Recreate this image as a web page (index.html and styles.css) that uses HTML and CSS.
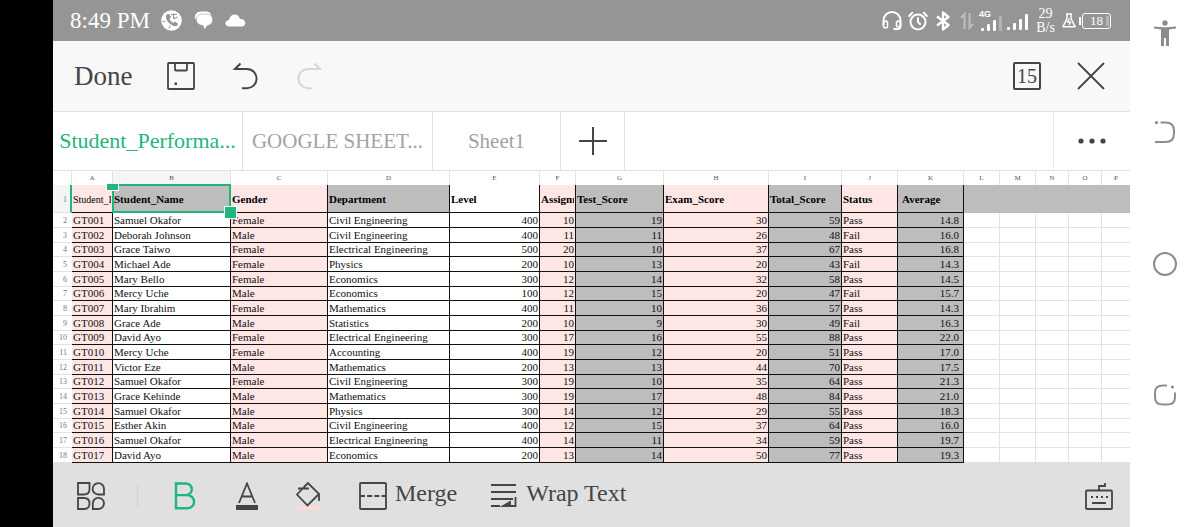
FILE: index.html
```html
<!DOCTYPE html>
<html lang="en">
<head>
<meta charset="utf-8">
<title>Student_Performance</title>
<link rel="stylesheet" href="styles.css">
</head>
<body>
<div class="device">
  <main class="app">
    <header class="status">
      <span class="clock">8:49 PM</span>
      <svg class="st-call" width="21" height="21" viewBox="0 0 21 21"><circle cx="10.500" cy="10.500" r="10.300" fill="#fff"/><path d="M5.500 4.500c-1 2-.5 5.500 2.500 8.500s6.500 4 8.500 2.500l.5-2-3-2-1.800 1.500c-2-1-3.200-2.500-3.700-4.200L10 7 8.500 4z" fill="#959595"/><path d="M10 4.500h6M12.500 3.500v4q0 2 4-.5" fill="none" stroke="#959595" stroke-width="1.200"/><path d="M1.500 11l3 1M8 18.500l1-3" stroke="#959595"/></svg>
      <svg class="st-chat" width="19" height="19" viewBox="0 0 19 19"><path d="M1 8c-1-4 2-7.500 6-7.500h5c3 0 5 2 5.500 4L8 4z" fill="#fff"/><path d="M9 3h3.500c8 0 8 10.500 1 11.500L10.500 18.500 9 14.500C0 14 0 3 9 3z" fill="#fff" stroke="#959595" stroke-width=".5"/></svg>
      <svg class="st-cloud" width="21" height="13" viewBox="0 0 21 13"><path d="M4 12.500C-1 12-1 6.500 4 6 5-.5 13-1.500 15 5c5-1 7.500 6 2.500 7.500z" fill="#fff"/></svg>
      <span class="grow"></span>
      <svg class="st-head" width="20" height="20" viewBox="0 0 20 20" fill="none" stroke="#fff" stroke-width="2"><path d="M1.500 14V9.500a8.500 8.500 0 0 1 17 0V15q0 3-3 3h-4"/><path d="M1.500 12q0-2 2-2t2 2v3q0 2-2 2t-2-2zM18.500 12q0-2-2-2t-2 2v2q0 2 2 2t2-2z" stroke-width="1.600"/></svg>
      <svg class="st-alarm" width="20" height="20" viewBox="0 0 20 20" fill="none" stroke="#fff" stroke-width="2" stroke-linecap="round"><circle cx="10" cy="11" r="7.500"/><path d="M10 7v4l2 2M1.200 5l3-3.200M18.800 5l-3-3.200"/></svg>
      <svg class="st-bt" width="14" height="20" viewBox="0 0 14 20" fill="none" stroke="#fff" stroke-width="2.300" stroke-linejoin="round"><path d="M1 5.500l11.500 8.500L7 18.500v-17L12.500 6 1 14.500"/></svg>
      <svg class="st-arrows" width="14" height="18" viewBox="0 0 14 18" fill="none" stroke="#bdbdbd" stroke-width="2"><path d="M4.500 17V2L1 6M9.500 1v15l3.500-4"/></svg>
      <span class="net"><span class="net-tag">4G</span><svg width="22" height="15" viewBox="0 0 22 15"><g fill="#fff"><rect x="1" y="12" width="3" height="3" rx="1"/><rect x="7" y="8" width="3" height="7" rx="1"/><rect x="13" y="4" width="3" height="11" rx="1"/></g><rect x="19" width="3" height="15" rx="1" fill="#b5b5b5"/></svg></span>
      <svg class="st-sig" width="21" height="16" viewBox="0 0 21 16" fill="#fff"><rect y="13" width="3" height="3" rx="1"/><rect x="6" y="9" width="3" height="7" rx="1"/><rect x="12" y="5" width="3" height="11" rx="1"/><rect x="18" width="3" height="16" rx="1"/></svg>
      <span class="rate"><span>29</span><span>B/s</span></span>
      <svg class="st-flask" width="14" height="15" viewBox="0 0 14 15" fill="none" stroke="#fff" stroke-width="1.500" stroke-linejoin="round"><path d="M4 1h6M5 1v4.500L1 13.700h12L9 5.500V1M7.500 5.500L5.500 9h3L7 12"/></svg>
      <span class="cap"></span><span class="battery">18</span>
    </header>

    <nav class="toolbar">
      <button class="done">Done</button>
      <button class="t-save" aria-label="Save"><svg width="28" height="28" viewBox="0 0 28 28" fill="none" stroke="#454545" stroke-width="1.800"><rect x="1" y="1" width="26" height="26" rx="1"/><path d="M8 1v6.500q0 1 1 1h10q1 0 1-1V1"/><rect x="8" y="21" width="1.500" height="1.500" fill="#454545" stroke-width="1"/></svg></button>
      <button class="t-undo" aria-label="Undo"><svg width="26" height="28" viewBox="0 0 26 28" fill="none" stroke="#454545" stroke-width="2"><path d="M8.500 1.500L3 7h12a9.600 9.600 0 0 1 0 19.200H10"/></svg></button>
      <button class="t-redo" aria-label="Redo" disabled><svg width="26" height="28" viewBox="0 0 26 28" fill="none" stroke="#d6d6d6" stroke-width="2"><path d="M19.500 1.500L25 7H13a9.600 9.600 0 0 0 0 19.200h4"/></svg></button>
      <span class="grow"></span>
      <button class="count">15</button>
      <button class="t-close" aria-label="Close"><svg width="28" height="28" viewBox="0 0 28 28" stroke="#454545" stroke-width="1.800"><path d="M1 1l26 26M27 1L1 27"/></svg></button>
    </nav>

    <nav class="tabs">
      <button class="tab tab-on">Student_Performa...</button>
      <button class="tab">GOOGLE SHEET...</button>
      <button class="tab tab-short">Sheet1</button>
      <button class="tab tab-add" aria-label="Add sheet"><svg width="28" height="28" viewBox="0 0 28 28" stroke="#454545" stroke-width="2"><path d="M14 0v28M0 14h28"/></svg></button>
      <span class="grow"></span>
      <button class="more" aria-label="More"><svg width="28" height="6" viewBox="0 0 28 6" fill="#454545"><circle cx="3" cy="3" r="2.600"/><circle cx="14" cy="3" r="2.600"/><circle cx="25" cy="3" r="2.600"/></svg></button>
    </nav>

    <section class="sheet">
      <table>
        <colgroup><col class="w-no"><col class="w-a"><col class="w-b"><col class="w-c"><col class="w-d"><col class="w-e"><col class="w-f"><col class="w-g"><col class="w-h"><col class="w-i"><col class="w-j"><col class="w-k"><col class="w-l"><col class="w-m"><col class="w-n"><col class="w-n"><col></colgroup>
        <thead>
          <tr class="letters"><th class="corner"></th><th>A</th><th class="picked">B</th><th>C</th><th>D</th><th>E</th><th>F</th><th>G</th><th>H</th><th>I</th><th>J</th><th>K</th><th>L</th><th>M</th><th>N</th><th>O</th><th>P</th></tr>
          <tr class="titles"><th class="no picked">1</th><th class="ink pink first"><span class="clip">Student_ID</span></th><th class="ink gray selected">Student_Name<span class="frame"></span><span class="handle top"></span><span class="handle bottom"></span></th><th class="ink pink">Gender</th><th class="ink gray">Department</th><th class="ink">Level</th><th class="ink pink"><span class="clip">Assignment</span></th><th class="ink gray">Test_Score</th><th class="ink pink">Exam_Score</th><th class="ink gray">Total_Score</th><th class="ink pink">Status</th><th class="ink gray avg">Average</th><th class="gray"></th><th class="gray"></th><th class="gray"></th><th class="gray"></th><th class="gray"></th></tr>
        </thead>
        <tbody id="rows"></tbody>
      </table>
    </section>

    <footer class="format">
      <button class="f-menu" aria-label="Tools"><svg width="28" height="28" viewBox="0 0 28 28" fill="none" stroke="#454545" stroke-width="1.800"><path d="M1 1h11.500v6q0 5.500-5.500 5.500H1zM27 12.500h-5.500a5.700 5.700 0 1 1 5.500-5.700zM1 27V16h6q5.500 0 5.500 5.500T7 27zM15.800 27v-5.500a5.600 5.600 0 1 1 5.600 5.500z"/></svg></button>
      <span class="rule"></span>
      <button class="f-bold" aria-label="Bold"><svg width="22" height="28" viewBox="0 0 22 28" fill="none" stroke="#1fb57d" stroke-width="2.400"><path d="M2 1.500h10a5.800 5.800 0 0 1 0 11.600H2zM2 13.100h11.500a6.600 6.600 0 0 1 0 13.200H2zM2 1.500v25"/></svg></button>
      <button class="f-color" aria-label="Font colour"><svg width="22" height="28" viewBox="0 0 22 28"><path d="M3 21L11 1.500 19 21M6 14.500h10" fill="none" stroke="#454545" stroke-width="1.800"/><path d="M0 23h22v5H0z" fill="#454545"/></svg></button>
      <button class="f-fill" aria-label="Fill colour"><svg width="26" height="28" viewBox="0 0 26 28"><path d="M2 24h22v4H2z" fill="#fddcda"/><path d="M13 1L2 12.500l10.500 11L24 12zM13 1L9 5M3 6.500h11M24 11v8" fill="none" stroke="#454545" stroke-width="1.800"/></svg></button>
      <button class="f-merge"><svg width="28" height="28" viewBox="0 0 28 28" fill="none" stroke="#454545" stroke-width="1.800"><rect x="1" y="1" width="26" height="26" rx="1"/><path d="M1 14h26" stroke-dasharray="5 2.200"/></svg><span class="word">Merge</span></button>
      <button class="f-wrap"><svg width="26" height="26" viewBox="0 0 26 26" fill="none" stroke="#454545" stroke-width="1.800"><path d="M0 2h25M0 9h25M0 16h22M0 23h9M24.500 14v9H14"/><path d="M12 23l7-4v4z" fill="#454545"/></svg><span class="word">Wrap Text</span></button>
      <span class="grow"></span>
      <button class="f-keys" aria-label="Keyboard"><svg width="28" height="28" viewBox="0 0 28 28" fill="none" stroke="#454545" stroke-width="1.800"><rect x="1" y="8.500" width="26" height="18.500" rx="1"/><path d="M14 9V4h6V1M7 21h14"/><path d="M6 15h2M11 15h2M16 15h2M21 15h2"/></svg></button>
    </footer>
  </main>

  <aside class="sysnav">
    <button aria-label="Accessibility"><svg width="24" height="26" viewBox="0 0 24 26" fill="#8d8d8d"><circle cx="12" cy="3" r="2.700"/><path d="M1 6.500q11 1.500 22 0v2l-7 1V26h-3v-8h-2v8H8V9.500l-7-1z"/></svg></button>
    <button class="s-back" aria-label="Back"><svg width="22" height="22" viewBox="0 0 22 22" fill="none" stroke="#8d8d8d" stroke-width="2"><path d="M6.500 1.500h5q8.500 0 8.500 8v3q0 8.500-8.500 8.500H1"/><circle cx="2.500" cy="1.700" r="1.600" fill="#8d8d8d" stroke="none"/></svg></button>
    <button class="s-home" aria-label="Home"><svg width="24" height="24" viewBox="0 0 24 24" fill="none" stroke="#8d8d8d" stroke-width="2"><circle cx="12" cy="12" r="11"/></svg></button>
    <button class="s-recent" aria-label="Recent"><svg width="22" height="22" viewBox="0 0 22 22" fill="none" stroke="#8d8d8d" stroke-width="2"><path d="M13 1.500H9q-8 0-8 7v5q0 7 8 7h4q8 0 8-7V8.500"/><circle cx="18.500" cy="3" r="1.600" fill="#8d8d8d" stroke="none"/></svg></button>
  </aside>
</div>
<script src="rows.js"></script>
</body>
</html>
```

FILE: styles.css
```css
* { box-sizing: border-box; }

body {
  margin: 0;
  background: #fff;
  font-family: "Liberation Serif", serif;
  color: #454545;
}

button {
  display: flex;
  align-items: center;
  justify-content: center;
  flex: none;
  margin: 0;
  padding: 0;
  border: 0;
  background: none;
  font: inherit;
  color: inherit;
  white-space: nowrap;
}

svg { display: block; flex: none; }
.grow { flex: 1; }

.device {
  display: flex;
  min-height: 100vh;
  border-left: 53px solid #000;
}

.app {
  flex: 1;
  min-width: 0;
  display: flex;
  flex-direction: column;
}

/* Status bar */
.status {
  display: flex;
  align-items: center;
  height: 41px;
  padding: 0 19px 0 17px;
  background: #959595;
  color: #fff;
  font-size: 23px;
}
.clock { width: 81px; white-space: nowrap; }
.st-call { margin-left: 10px; }
.st-chat { margin-left: 12px; }
.st-cloud { margin-left: 12px; }
.st-alarm { margin-left: 6px; }
.st-bt { margin-left: 8px; }
.st-arrows { margin-left: 10px; }
.net { position: relative; margin: 6px 0 0 6px; }
.net-tag {
  position: absolute;
  left: -1px;
  top: -6px;
  font: bold 9px/9px "Liberation Sans", sans-serif;
}
.st-sig { margin: 3px 0 0 5px; }
.rate {
  display: flex;
  flex-direction: column;
  align-items: center;
  margin-left: 7px;
  width: 21px;
  font-size: 14px;
  line-height: 14px;
}
.st-flask { margin-left: 6px; }
.cap { width: 2px; height: 8px; margin-left: 3px; background: #fff; }
.battery {
  margin-left: 1px;
  width: 29px;
  height: 16px;
  border: 1px solid #fff;
  border-radius: 3px;
  font-size: 13px;
  line-height: 14px;
  text-align: center;
  background: linear-gradient(#b5b5b5, #b5b5b5) no-repeat 23px 2px / 3px 10px;
}

/* Main toolbar */
.toolbar {
  display: flex;
  align-items: center;
  height: 71px;
  padding: 0 25px 0 21px;
  background: #f8f8f8;
  border-bottom: 1px solid #e2e2e2;
}
.done { font-size: 27px; }
.t-save { margin-left: 35px; }
.t-undo { margin-left: 37px; }
.t-redo { margin-left: 37px; }
.count {
  width: 28px;
  height: 28px;
  border: 2px solid #454545;
  border-radius: 2px;
  font-size: 20px;
}
.t-close { margin-left: 36px; }

/* Sheet tabs */
.tabs {
  display: flex;
  height: 59px;
  border-bottom: 1px solid #e2e2e2;
}
.tab {
  width: 190px;
  border-right: 1px solid #e2e2e2;
  color: #a3a3a3;
  font-size: 21px;
}
.tab-on { color: #1fb57d; font-size: 22px; }
.tab-short { width: 128px; }
.tab-add { width: 64px; }
.more { width: 77px; border-left: 1px solid #e8e8e8; }

/* Spreadsheet */
.sheet { flex: 1; overflow: hidden; }
table {
  width: 100%;
  table-layout: fixed;
  border-collapse: separate;
  border-spacing: 0;
}
.w-no { width: 19px; }
.w-a { width: 41px; }
.w-b { width: 118px; }
.w-c { width: 97px; }
.w-d { width: 122px; }
.w-e { width: 90px; }
.w-f { width: 36px; }
.w-g { width: 88px; }
.w-h { width: 105px; }
.w-i { width: 73px; }
.w-j { width: 56px; }
.w-k { width: 66px; }
.w-l { width: 36px; }
.w-m { width: 36px; }
.w-n { width: 33px; }

th, td {
  padding: 0 1px;
  border-right: 1px solid #e2e2e2;
  border-bottom: 1px solid #e2e2e2;
  font-size: 11px;
  line-height: 13px;
  font-weight: normal;
  text-align: left;
  white-space: nowrap;
}
th:last-child, td:last-child { border-right: 0; }
.letters th {
  height: 14px;
  border-bottom: 0;
  font-size: 7px;
  text-align: center;
  color: #555;
}
.letters .picked, .no.picked { background: #f3f5f7; }
.letters + .titles .no, .no {
  padding-right: 5px;
  border-right: 0;
  font-size: 8px;
  text-align: right;
  color: #777;
}
.ink { border-color: #111; color: #111; }
.pink { background: #fee6e5; }
.gray { background: #bdbdbd; }
.titles th { height: 28px; padding-top: 2px; }
.titles .ink { font-weight: bold; color: #000; }
.titles .gray:not(.ink) { border-color: #bdbdbd; }
.letters + .titles .no { border-right: 2px solid #1fb57d; padding-right: 3px; }
.titles .first { font-size: 10px; font-weight: normal; }
.titles .avg { padding-left: 4px; }
.clip { display: block; overflow: hidden; }
.num { text-align: right; }
.avg.num { padding-right: 4px; }

tbody td, tbody th { height: 15px; }
tbody tr:nth-child(3n) td, tbody tr:nth-child(3n) th { height: 14px; }

.selected { position: relative; }
.frame {
  position: absolute;
  inset: -1px;
  border: 2px solid #1fb57d;
}
.handle { position: absolute; background: #1fb57d; border: 1px solid #fff; }
.handle.top { left: -7px; top: -1px; width: 13px; height: 7px; border-top: 0; }
.handle.bottom { right: -7px; bottom: -7px; width: 13px; height: 13px; z-index: 1; }

/* Formatting bar */
.format {
  display: flex;
  align-items: center;
  height: 65px;
  padding: 0 17px 0 24px;
  background: #e0e0e0;
  font-size: 24px;
}
.rule { width: 1px; height: 26px; margin-left: 32px; background: #d2d2d2; }
.f-bold { margin-left: 36px; }
.f-color { margin-left: 40px; }
.f-fill { margin-left: 37px; }
.f-merge { margin-left: 38px; gap: 8px; }
.f-wrap { margin-left: 34px; gap: 9px; }
.word { padding-bottom: 5px; }

/* System navigation */
.sysnav {
  display: flex;
  flex-direction: column;
  align-items: center;
  width: 70px;
  padding-top: 20px;
}
.s-back { margin-top: 75px; }
.s-home { margin-top: 109px; }
.s-recent { margin-top: 108px; }
```

FILE: rows.js
```js
const students = [
  ["GT001", "Samuel Okafor", "Female", "Civil Engineering", 400, 10, 19, 30, 59, "Pass", "14.8"],
  ["GT002", "Deborah Johnson", "Male", "Civil Engineering", 400, 11, 11, 26, 48, "Fail", "16.0"],
  ["GT003", "Grace Taiwo", "Female", "Electrical Engineering", 500, 20, 10, 37, 67, "Pass", "16.8"],
  ["GT004", "Michael Ade", "Female", "Physics", 200, 10, 13, 20, 43, "Fail", "14.3"],
  ["GT005", "Mary Bello", "Female", "Economics", 300, 12, 14, 32, 58, "Pass", "14.5"],
  ["GT006", "Mercy Uche", "Male", "Economics", 100, 12, 15, 20, 47, "Fail", "15.7"],
  ["GT007", "Mary Ibrahim", "Female", "Mathematics", 400, 11, 10, 36, 57, "Pass", "14.3"],
  ["GT008", "Grace Ade", "Male", "Statistics", 200, 10, 9, 30, 49, "Fail", "16.3"],
  ["GT009", "David Ayo", "Female", "Electrical Engineering", 300, 17, 16, 55, 88, "Pass", "22.0"],
  ["GT010", "Mercy Uche", "Female", "Accounting", 400, 19, 12, 20, 51, "Pass", "17.0"],
  ["GT011", "Victor Eze", "Male", "Mathematics", 200, 13, 13, 44, 70, "Pass", "17.5"],
  ["GT012", "Samuel Okafor", "Female", "Civil Engineering", 300, 19, 10, 35, 64, "Pass", "21.3"],
  ["GT013", "Grace Kehinde", "Male", "Mathematics", 300, 19, 17, 48, 84, "Pass", "21.0"],
  ["GT014", "Samuel Okafor", "Male", "Physics", 300, 14, 12, 29, 55, "Pass", "18.3"],
  ["GT015", "Esther Akin", "Male", "Civil Engineering", 400, 12, 15, 37, 64, "Pass", "16.0"],
  ["GT016", "Samuel Okafor", "Male", "Electrical Engineering", 400, 14, 11, 34, 59, "Pass", "19.7"],
  ["GT017", "David Ayo", "Male", "Economics", 200, 13, 14, 50, 77, "Pass", "19.3"]
];
const look = ["pink", "", "pink", "", "num", "pink num", "gray num", "pink num", "gray num", "pink", "gray num avg"];

document.getElementById("rows").innerHTML = students.map((student, i) =>
  `<tr><th class="no">${i + 2}</th>` +
  student.map((value, c) => `<td class="ink ${look[c]}">${value}</td>`).join("") +
  "<td></td>".repeat(5) + "</tr>"
).join("");
```
